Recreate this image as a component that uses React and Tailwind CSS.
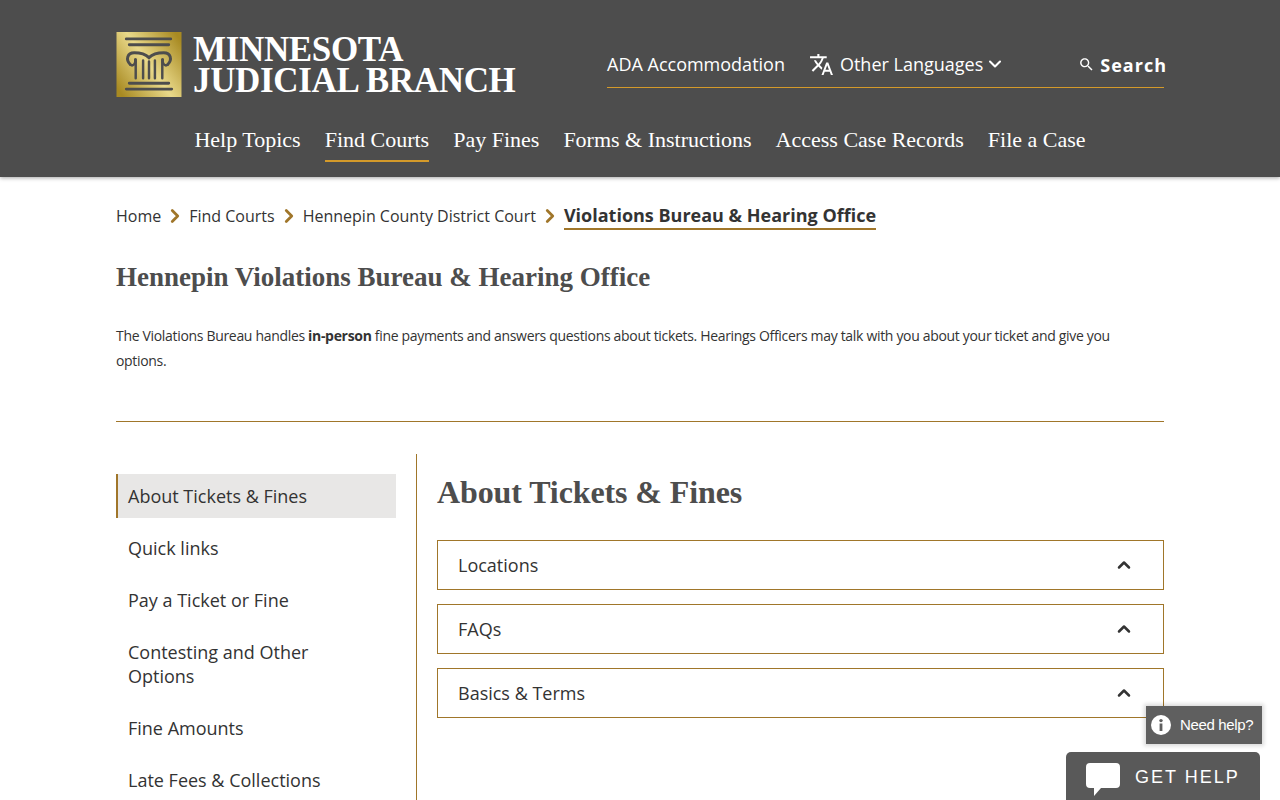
import React from "react";
import { ChevronDown, ChevronRight, ChevronUp } from "lucide-react";

const serif = "font-['Liberation_Serif',serif]";

const Logo = () => (
  <svg width="66" height="65" viewBox="0 0 66 66" className="shrink-0">
    <defs>
      <linearGradient id="gold" x1="0" y1="0.85" x2="1" y2="0.15">
        <stop offset="0" stopColor="#a88a22" />
        <stop offset="0.5" stopColor="#e9d98a" />
        <stop offset="1" stopColor="#a88a22" />
      </linearGradient>
    </defs>
    <rect width="66" height="66" fill="url(#gold)" />
    <g fill="none" stroke="#4d4d4d" strokeLinecap="round">
      <path d="M10 7H55M13 13H53" strokeWidth="3" />
      <path d="M14 33C9 28 11 21 18 21C25 21 29 22 33 26C37 22 41 21 48 21C55 21 57 28 52 33" strokeWidth="3" />
      <path d="M14 33C16 35 20 33 19 28M52 33C50 35 46 33 47 28" strokeWidth="2.5" />
      <path d="M19.5 28V47M27 29V47M33 30V47M39 29V47M46.5 28V47" strokeWidth="2.5" />
      <path d="M13 52H53M10 58H56" strokeWidth="3" />
    </g>
  </svg>
);

const navItems = ["Help Topics", "Find Courts", "Pay Fines", "Forms & Instructions", "Access Case Records", "File a Case"];
const sideItems = ["About Tickets & Fines", "Quick links", "Pay a Ticket or Fine", "Contesting and Other Options", "Fine Amounts", "Late Fees & Collections"];
const panels = ["Locations", "FAQs", "Basics & Terms"];

const Crumb = ({ children }) => (
  <>
    <span className="pb-[2px] leading-[24px]">{children}</span>
    <ChevronRight size={22} strokeWidth={3} className="text-[#a0762a] mx-[3px] mb-[2px]" />
  </>
);

export default function App() {
  return (
    <div className="relative h-screen overflow-hidden bg-white text-[#333] font-['Open_Sans',sans-serif]">
      <header className="h-[177px] bg-[#4d4d4d] shadow-[0_1px_4px_rgba(0,0,0,0.35)] text-white">
        <div className="mx-[116px] pt-8">
          <div className="flex">
            <Logo />
            <div className={`ml-[11px] ${serif} font-bold text-[35px] leading-[31px] pt-[2px] whitespace-nowrap tracking-[-0.35px]`}>
              <div>MINNESOTA</div>
              <div>JUDICIAL BRANCH</div>
            </div>
            <div className="ml-auto w-[557px] h-[56px] flex flex-col">
              <div className="flex-1 flex items-center text-[18px] pt-[9px]">
                <span>ADA Accommodation</span>
                <svg width="25" height="25" viewBox="0 0 24 24" fill="#fff" className="ml-[24px] mr-[6px]">
                  <path d="M12.87 15.07l-2.54-2.51.03-.03c1.74-1.94 2.98-4.17 3.71-6.53H17V4h-7V2H8v2H1v1.99h11.17C11.5 7.92 10.44 9.75 9 11.35 8.07 10.32 7.3 9.19 6.69 8h-2c.73 1.63 1.73 3.17 2.98 4.56l-5.09 5.02L4 19l5-5 3.11 3.11.76-2.04zM18.5 10h-2L12 22h2l1.12-3h4.75L21 22h2l-4.5-12zm-2.62 7l1.62-4.33L19.12 17h-3.24z" />
                </svg>
                <span>Other Languages</span>
                <ChevronDown size={20} strokeWidth={2.5} className="ml-[2px]" />
                <svg width="17" height="17" viewBox="0 0 24 24" fill="#fff" className="ml-auto mr-[5px]">
                  <path d="M15.5 14h-.79l-.28-.27C15.41 12.59 16 11.11 16 9.5 16 5.91 13.09 3 9.5 3S3 5.91 3 9.5 5.91 16 9.5 16c1.61 0 3.09-.59 4.23-1.57l.27.28v.79l5 4.99L20.49 19l-4.99-5zm-6 0C7.01 14 5 11.99 5 9.5S7.01 5 9.5 5 14 7.01 14 9.5 11.99 14 9.5 14z" />
                </svg>
                <span className="font-bold tracking-[1px] mr-[-3px] pt-[2px]">Search</span>
              </div>
              <div className="h-px bg-[#d49a2a]" />
            </div>
          </div>
          <nav className={`flex justify-center gap-6 mt-[28px] text-[22px] ${serif}`}>
            {navItems.map((item) => (
              <span key={item} className={`pb-[5px] leading-[30px] border-b-2 ${item === "Find Courts" ? "border-[#d49a2a]" : "border-transparent"}`}>
                {item}
              </span>
            ))}
          </nav>
        </div>
      </header>

      <main className="mx-[116px]">
        <div className="flex items-center pt-[26px] text-[16px]">
          <Crumb>Home</Crumb>
          <Crumb>Find Courts</Crumb>
          <Crumb>Hennepin County District Court</Crumb>
          <span className="font-bold text-[18px] leading-[25px] border-b-2 border-[#a0762a]">Violations Bureau &amp; Hearing Office</span>
        </div>
        <h1 className={`${serif} font-bold text-[27px] leading-[36px] mt-[29px] text-[#4d4d4d]`}>Hennepin Violations Bureau &amp; Hearing Office</h1>
        <p className="mt-[28px] pr-[40px] text-[14px] leading-[25px] tracking-[-0.32px] text-[#333]">
          The Violations Bureau handles <b>in-person</b> fine payments and answers questions about tickets. Hearings Officers may talk with you about your ticket and give you options.
        </p>
        <div className="mt-[48px] border-t border-[#a0762a]" />

        <div className="flex mt-8">
          <aside className="w-[301px] shrink-0 border-r border-[#a0762a] pt-5 pr-5">
            {sideItems.map((item, i) => (
              <div
                key={item}
                className={`mb-2 py-[10px] text-[18px] leading-[24px] pr-8 ${i === 0 ? "bg-[#e8e7e6] border-l-2 border-[#a0762a] pl-[10px]" : "pl-3"}`}
              >
                {item}
              </div>
            ))}
          </aside>
          <section className="flex-1 pl-5">
            <h2 className={`${serif} font-bold text-[32px] leading-[40px] mt-[18px] tracking-[-0.1px] text-[#4d4d4d]`}>About Tickets &amp; Fines</h2>
            <div className="mt-[28px] flex flex-col gap-[14px]">
              {panels.map((p) => (
                <div key={p} className="h-[50px] border border-[#a0762a] flex items-center justify-between pl-5 pr-[29px] text-[18px]">
                  <span>{p}</span>
                  <ChevronUp size={20} strokeWidth={3} />
                </div>
              ))}
            </div>
          </section>
        </div>
      </main>

      <div className="absolute left-[1146px] top-[706px] w-[116px] h-[38px] bg-[#5f5f5f] flex items-center text-white text-[15px] tracking-[-0.35px] font-['Liberation_Sans',sans-serif] shadow-[0_0_4px_2px_rgba(0,0,0,0.15)]">
        <svg width="20" height="20" viewBox="0 0 20 20" className="ml-[5px] mr-[9px]">
          <circle cx="10" cy="10" r="10" fill="#fff" />
          <rect x="8.6" y="8.5" width="2.8" height="7.5" fill="#5f5f5f" />
          <circle cx="10" cy="5.6" r="1.7" fill="#5f5f5f" />
        </svg>
        Need help?
      </div>

      <div className="absolute left-[1066px] top-[752px] w-[194px] h-[48px] bg-[#595959] rounded-t-[5px] flex items-start text-white font-['Liberation_Sans',sans-serif]">
        <svg width="34" height="34" viewBox="0 0 34 34" className="ml-[20px] mt-[11px]">
          <path d="M4 0H30A4 4 0 0 1 34 4V21A4 4 0 0 1 30 25H15L8 33V25H4A4 4 0 0 1 0 21V4A4 4 0 0 1 4 0Z" fill="#fff" />
        </svg>
        <span className="ml-[15px] mt-[13px] text-[18px] leading-[24px] tracking-[2px]">GET HELP</span>
      </div>
    </div>
  );
}
